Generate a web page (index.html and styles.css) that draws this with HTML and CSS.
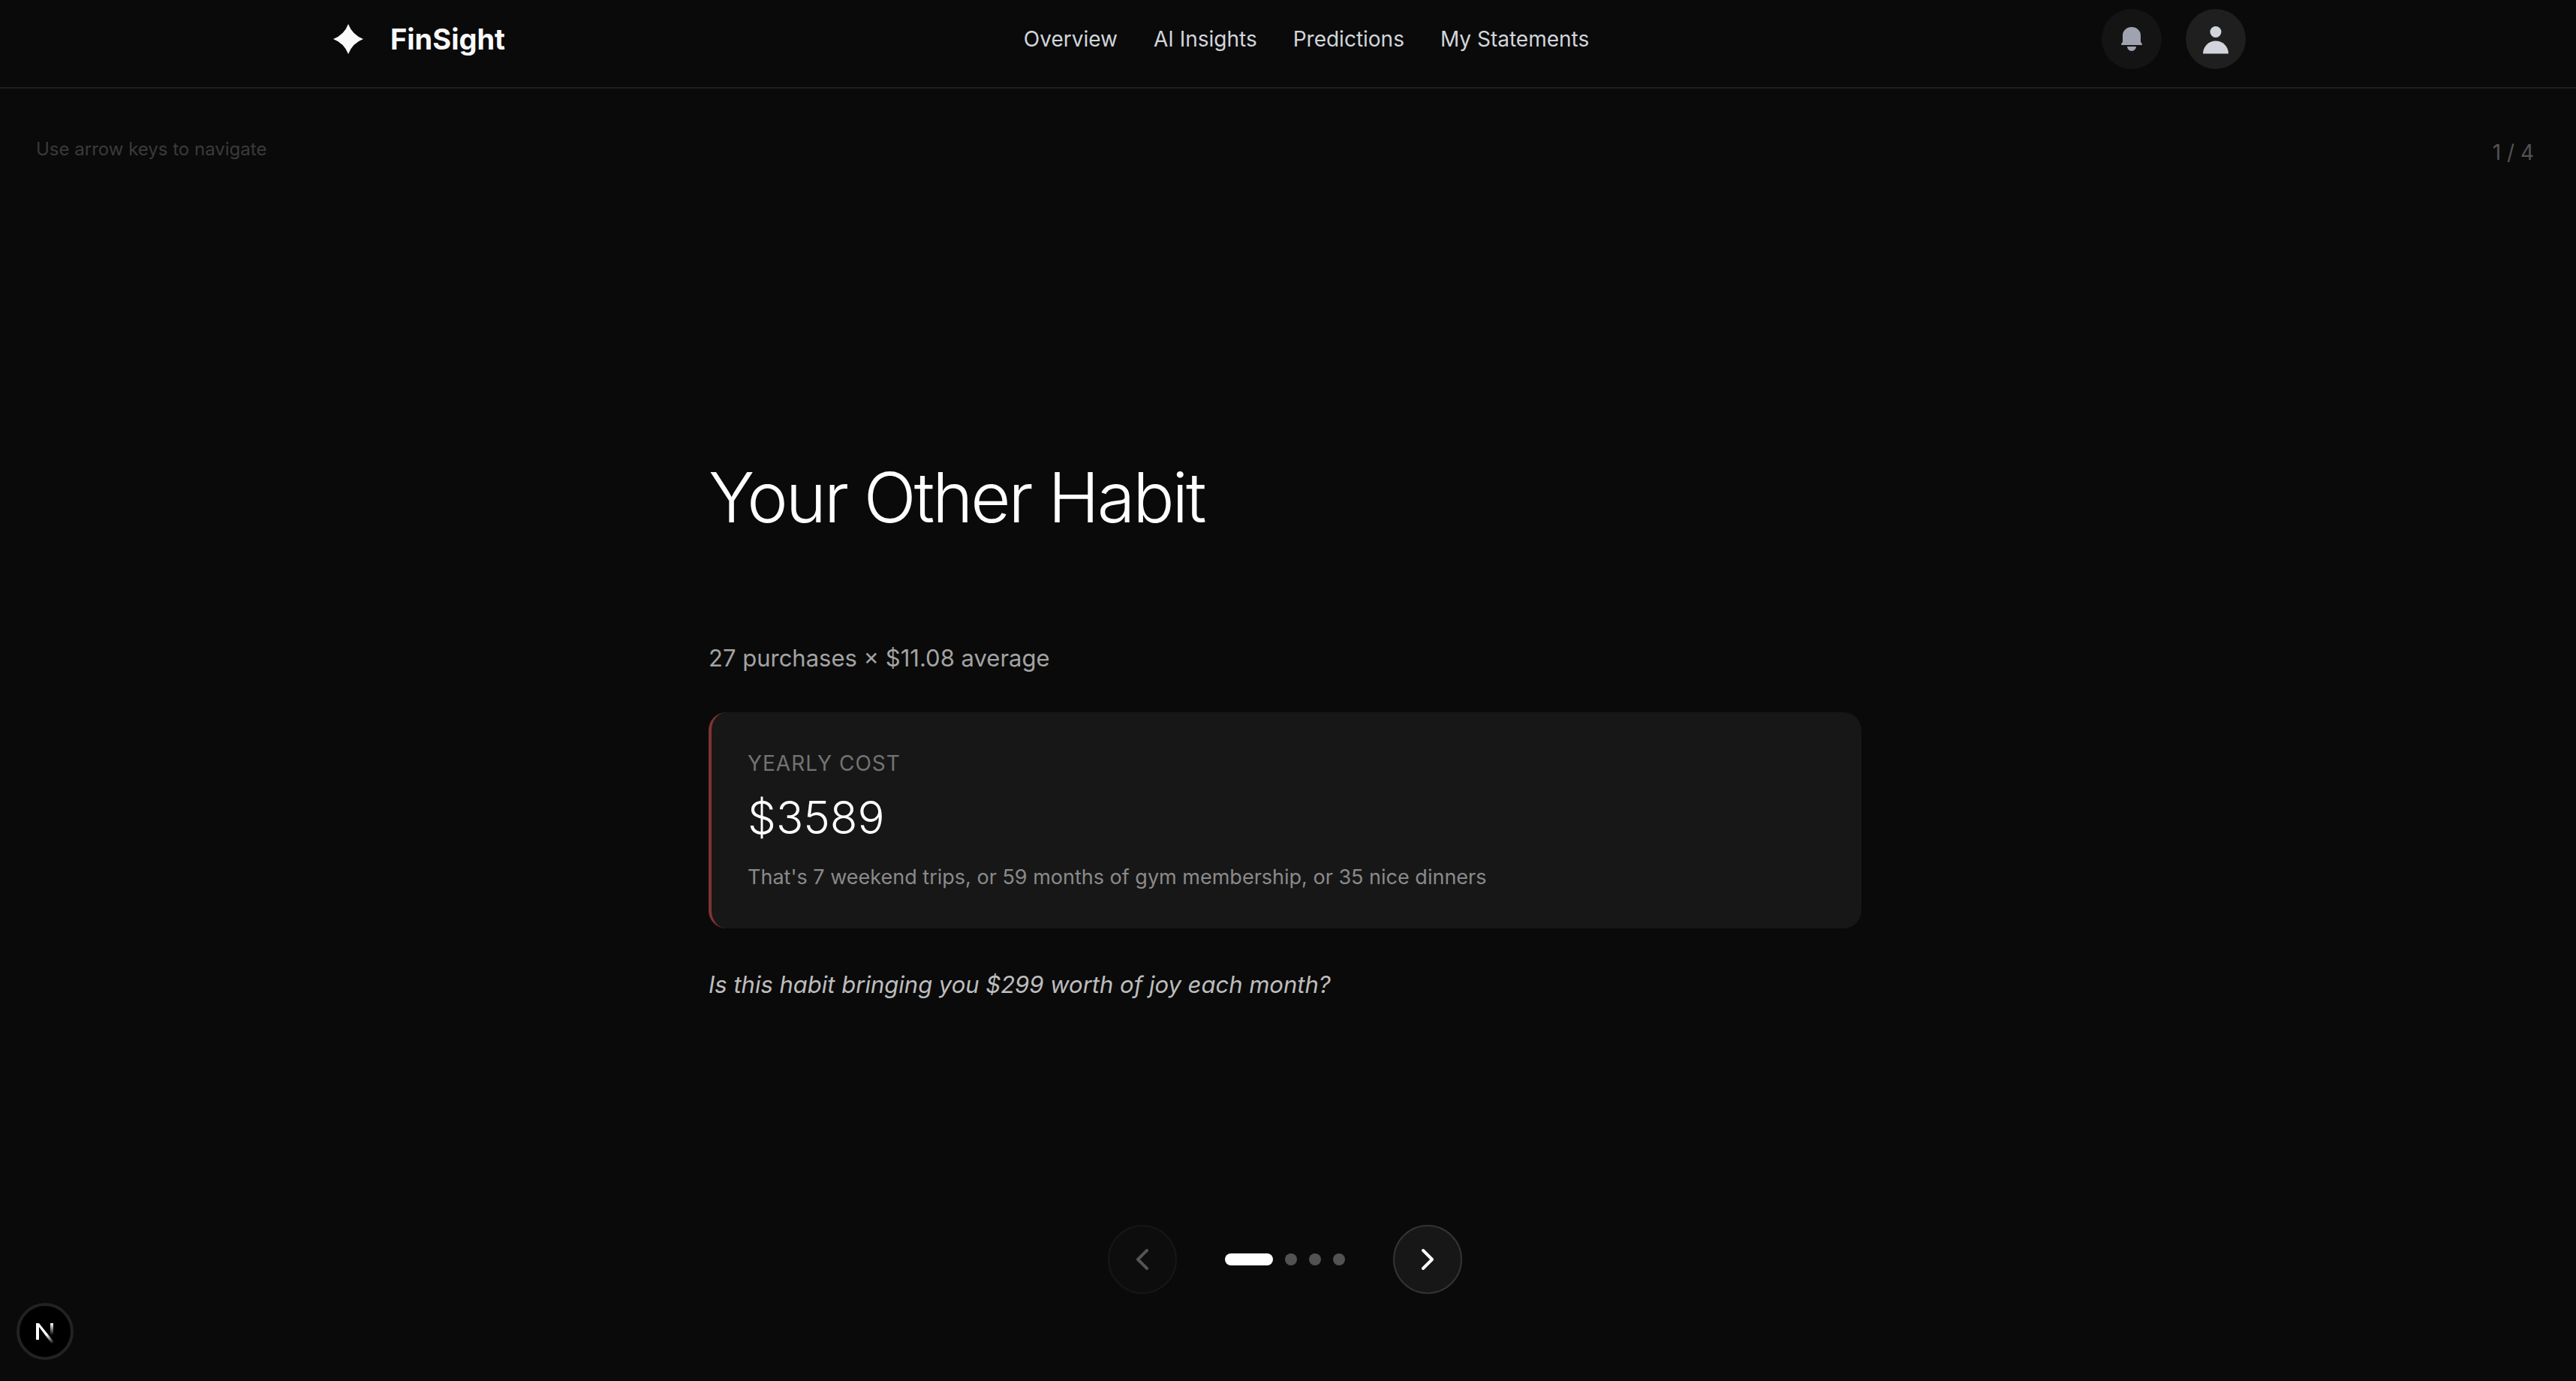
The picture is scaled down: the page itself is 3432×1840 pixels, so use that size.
FILE: index.html
```html
<!DOCTYPE html>
<html lang="en">
<head>
<meta charset="utf-8">
<title>FinSight</title>
<link rel="stylesheet" href="styles.css">
</head>
<body>
<header class="site-header">
  <div class="header-inner">
    <a class="brand" href="#">
      <svg class="brand-mark" viewBox="0 0 40 40" aria-hidden="true"><path d="M20 0Q25.500 14.500 40 20Q25.500 25.500 20 40Q14.500 25.500 0 20Q14.500 14.500 20 0Z" fill="#fafafa"/></svg>
      <span>FinSight</span>
    </a>
    <nav class="main-nav">
      <a href="#">Overview</a>
      <a href="#">AI Insights</a>
      <a href="#">Predictions</a>
      <a href="#">My Statements</a>
    </nav>
    <div class="actions">
      <button class="round-button" type="button" aria-label="Notifications">
        <svg viewBox="0 0 80 80"><path d="M28 44V35a12 11 0 0 1 24 0v9q2 1 2 4H26q0-3 2-4ZM34 50h12a6 6 0 0 1-12 0Z" fill="#9fa3af"/></svg>
      </button>
      <button class="round-button round-button--user" type="button" aria-label="Account">
        <svg viewBox="0 0 80 80"><circle cx="40" cy="30.500" r="7.500"/><path d="M23 59.500a17 17 0 0 1 34 0Z"/></svg>
      </button>
    </div>
  </div>
</header>
<main class="deck">
  <div class="deck-top">
    <p class="hint">Use arrow keys to navigate</p>
    <p class="counter">1 / 4</p>
  </div>
  <article class="slide">
    <h1>Your Other Habit</h1>
    <p class="summary">27 purchases × $11.08 average</p>
    <section class="cost-card">
      <h2>Yearly cost</h2>
      <p class="amount">$3589</p>
      <p class="equivalent">That's 7 weekend trips, or 59 months of gym membership, or 35 nice dinners</p>
    </section>
    <p class="question">Is this habit bringing you $299 worth of joy each month?</p>
  </article>
  <div class="pager">
    <button class="arrow" type="button" aria-label="Previous" disabled>
      <svg viewBox="0 0 40 40"><path d="M26 8 14 20 26 32"/></svg>
    </button>
    <div class="dots">
      <button class="dot dot--active" type="button" aria-label="Slide 1"></button>
      <button class="dot" type="button" aria-label="Slide 2"></button>
      <button class="dot" type="button" aria-label="Slide 3"></button>
      <button class="dot" type="button" aria-label="Slide 4"></button>
    </div>
    <button class="arrow" type="button" aria-label="Next">
      <svg viewBox="0 0 40 40"><path d="M14 8 26 20 14 32"/></svg>
    </button>
  </div>
</main>
<button class="dev-badge" type="button" aria-label="Developer tools">
  <svg viewBox="0 0 76 76">
    <defs>
      <linearGradient id="fade-diagonal" gradientUnits="userSpaceOnUse" x1="40" y1="42" x2="49" y2="54"><stop stop-color="#fff"/><stop offset="1" stop-color="#fff" stop-opacity="0"/></linearGradient>
      <linearGradient id="fade-stem" x1="0" y1="0" x2="0" y2="1"><stop stop-color="#fff"/><stop offset="1" stop-color="#fff" stop-opacity="0"/></linearGradient>
    </defs>
    <path d="M26 49V27h4L50 52l-3 2.500L30 32v17Z" fill="url(#fade-diagonal)"/>
    <rect x="45" y="27" width="4" height="16" fill="url(#fade-stem)"/>
  </svg>
</button>
</body>
</html>
```
FILE: styles.css
```css
* { box-sizing: border-box; }
body {
  margin: 0;
  min-height: 100vh;
  display: flex;
  flex-direction: column;
  background: #0a0a0a;
  color: #fff;
  font-family: Inter, "Liberation Sans", sans-serif;
}
h1, h2, p { margin: 0; font-weight: 400; }
a { color: inherit; text-decoration: none; }
button { padding: 0; border: 0; font: inherit; color: inherit; cursor: pointer; }
svg { display: block; }

.site-header {
  padding: 12px 8px 24px 0;
  border-bottom: 2px solid #1f1f1f;
}
.header-inner {
  max-width: 2560px;
  margin: 0 auto;
  display: flex;
  align-items: center;
  justify-content: space-between;
}
.brand {
  display: flex;
  align-items: center;
  gap: 36px;
  padding: 0 8px 0 12px;
  color: #fafafa;
  font-size: 38px;
  line-height: 56px;
  font-weight: 700;
}
.brand-mark { width: 40px; height: 40px; }
.main-nav {
  display: flex;
  gap: 48px;
  color: #d1d5db;
  font-size: 28px;
  line-height: 42px;
  font-weight: 400;
}
.actions { display: flex; gap: 32px; }
.round-button {
  width: 80px;
  height: 80px;
  border-radius: 50%;
  background: #141414;
}
.round-button--user { background: #1f1f1f; fill: #d1d5db; }

.deck {
  flex: 1;
  display: flex;
  flex-direction: column;
  padding: 64px 56px 116px 48px;
}
.deck-top {
  display: flex;
  justify-content: space-between;
}
.hint { color: #3a3a3a; font-size: 24px; line-height: 34px; }
.counter { color: #525252; font-size: 28px; line-height: 42px; }

.slide {
  flex: 1;
  width: 100%;
  max-width: 1536px;
  margin: 0 auto;
  padding-top: 86px;
  display: flex;
  flex-direction: column;
  justify-content: center;
}
.slide h1 {
  margin-bottom: 130px;
  font-size: 92px;
  line-height: 120px;
  font-weight: 300;
  letter-spacing: -3px;
}
.summary { color: #a3a3a3; font-size: 31px; line-height: 48px; }
.cost-card {
  margin: 48px 0;
  padding: 48px;
  border-left: 4px solid #7f3333;
  border-radius: 24px;
  background: #171717;
}
.cost-card h2 {
  color: #737373;
  font-size: 28px;
  line-height: 40px;
  letter-spacing: 1px;
  text-transform: uppercase;
}
.amount { margin: 16px 0 24px; font-size: 60px; line-height: 72px; font-weight: 300; }
.equivalent { color: #8a8a8a; font-size: 27px; line-height: 40px; }
.question { color: #bdbdbd; font-size: 31px; line-height: 54px; font-style: italic; }

.pager { display: flex; align-items: center; justify-content: center; gap: 64px; }
.arrow {
  display: grid;
  place-items: center;
  width: 92px;
  height: 92px;
  border: 2px solid #333;
  border-radius: 50%;
  background: #171717;
}
.arrow:disabled { opacity: 0.3; cursor: default; }
.arrow svg {
  width: 40px;
  height: 40px;
  fill: none;
  stroke: #fff;
  stroke-width: 4;
  stroke-linecap: round;
  stroke-linejoin: round;
}
.dots { display: flex; gap: 16px; }
.dot { width: 16px; height: 16px; border-radius: 8px; background: #525252; }
.dot--active { width: 64px; background: #fff; }

/* Floats over the page in the lower left corner */
.dev-badge {
  position: fixed;
  left: 22px;
  bottom: 28px;
  width: 76px;
  height: 76px;
  border: 4px solid #222;
  border-radius: 50%;
  background: #000;
}
.dev-badge svg { margin: -4px; width: 76px; height: 76px; }
```
